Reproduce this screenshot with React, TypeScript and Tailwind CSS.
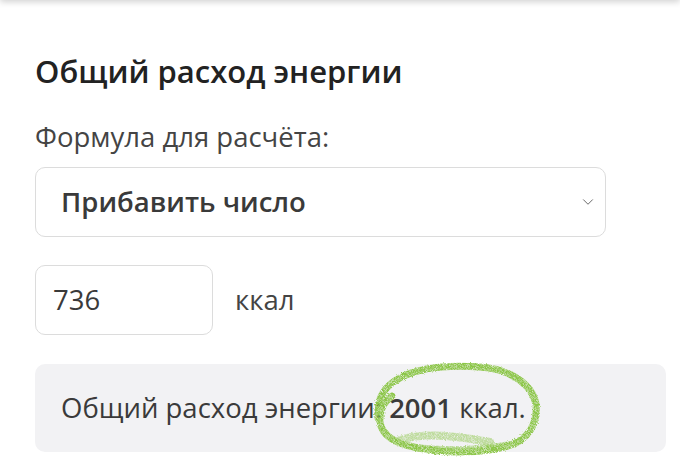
import { ChevronDown } from "lucide-react";

// Hand-drawn crayon loop around the result value
const Scribble = () => (
  <svg
    className="pointer-events-none absolute left-[335px] top-[-4px]"
    width="180"
    height="100"
    viewBox="0 0 180 100"
  >
    <defs>
      <filter id="crayon" x="-10%" y="-10%" width="120%" height="120%">
        <feTurbulence type="fractalNoise" baseFrequency="1.1" numOctaves="2" seed="3" result="noise" />
        <feColorMatrix
          in="noise"
          type="matrix"
          values="0 0 0 0 0  0 0 0 0 0  0 0 0 0 0  0 0 0 -2.2 1.9"
          result="mask"
        />
        <feComposite in="SourceGraphic" in2="mask" operator="in" result="tex" />
        <feDisplacementMap in="tex" in2="noise" scale="3" />
      </filter>
    </defs>
    <g filter="url(#crayon)" fill="none" stroke="#8cc648" strokeLinecap="round" strokeLinejoin="round">
      <path
        d="M8 58 C 6 40, 14 26, 30 18 C 50 7, 80 5, 110 7 C 140 9, 162 24, 166 44 C 168 64, 158 80, 138 86 C 112 93, 78 94, 48 88 C 26 84, 12 76, 10 62 C 9 50, 14 42, 22 36"
        strokeWidth="7"
      />
      <path d="M30 80 C 55 72, 85 76, 120 82" strokeWidth="8" opacity="0.5" />
      <path d="M40 86 C 70 91, 110 90, 140 84" strokeWidth="6" opacity="0.65" />
    </g>
  </svg>
);

export default function App() {
  return (
    <div className="relative h-[471px] w-[680px] overflow-hidden bg-white font-['Open_Sans',sans-serif] text-[#444]">
      <div className="absolute inset-x-0 top-[-10px] h-[10px] shadow-[0_2px_6px_rgba(0,0,0,0.18)]" />
      <div className="flex flex-col px-[35px] pt-[51px]">
        <h2 className="text-[31px] font-semibold leading-[40px] text-[#222]">Общий расход энергии</h2>
        <div className="mt-[28px] text-[27.5px] leading-[36px]">Формула для расчёта:</div>
        <div className="mt-[12px] flex h-[70px] w-[571px] items-center justify-between rounded-[10px] border border-[#dcdcdc] pl-[25px] pr-[8px]">
          <span className="text-[27.5px] font-semibold leading-[36px] text-[#3a3a3a]">Прибавить число</span>
          <ChevronDown className="h-[18px] w-[18px] text-[#666]" strokeWidth={1.3} />
        </div>
        <div className="mt-[28px] flex items-center gap-[22px]">
          <div className="flex h-[70px] w-[178px] items-center rounded-[10px] border border-[#dcdcdc] pl-[17px] text-[27.5px] leading-[36px] text-[#3a3a3a]">
            736
          </div>
          <span className="text-[27.5px] leading-[36px]">ккал</span>
        </div>
        <div className="relative mt-[29px] flex h-[88px] w-[631px] items-center rounded-[10px] bg-[#f2f2f4] pl-[26px]">
          <span className="text-[27.5px] leading-[36px] text-[#3a3a3a]">
            Общий расход энергии: <b className="font-semibold">2001</b> ккал.
          </span>
          <Scribble />
        </div>
      </div>
    </div>
  );
}
